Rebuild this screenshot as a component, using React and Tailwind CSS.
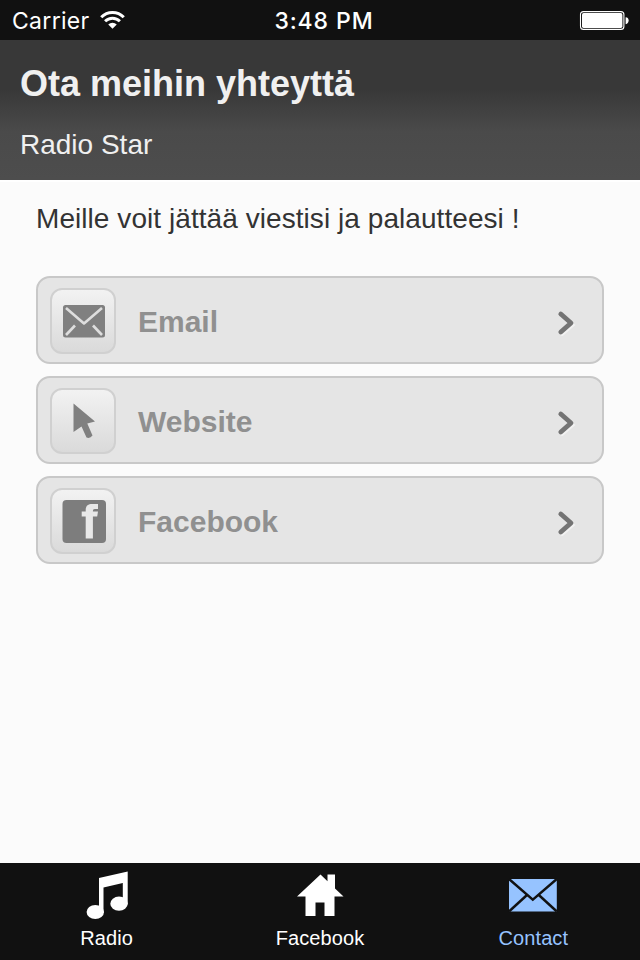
import React from "react";

function WifiIcon() {
  return (
    <svg width="25" height="20" viewBox="0 0 26 20" fill="none" stroke="#fff">
      <path d="M1.3 7.1A16.4 16.4 0 0 1 24.7 7.1" strokeWidth="3.2" />
      <path d="M5.3 11.4A10.7 10.7 0 0 1 20.7 11.4" strokeWidth="3" />
      <path d="M13 19L8.6 14.7A6 6 0 0 1 17.4 14.7Z" fill="#fff" stroke="none" />
    </svg>
  );
}

function BatteryIcon() {
  return (
    <svg width="50" height="20" viewBox="0 0 50 20">
      <rect x="1.5" y="1.6" width="43.4" height="17.8" rx="3" fill="none" stroke="#fff" strokeWidth="1.1" />
      <rect x="3" y="3.1" width="40.4" height="14.8" rx="1.6" fill="#fff" />
      <path d="M46.6 7.2C48.8 7.4 49.6 8.7 49.6 10.5S48.8 13.8 46.6 14.2Z" fill="#fff" />
    </svg>
  );
}

function MailGlyph() {
  return (
    <svg width="62" height="62" viewBox="0 0 62 62">
      <rect x="11" y="15" width="42" height="32.5" rx="2.5" fill="#808080" />
      <g fill="none" stroke="#dedede" strokeWidth="2.6" strokeLinejoin="round">
        <path d="M14 18L32 33.5L50 18" />
        <path d="M14 45L23 35.5" />
        <path d="M50 45L41 35.5" />
      </g>
    </svg>
  );
}

function CursorGlyph() {
  return (
    <svg width="62" height="62" viewBox="0 0 62 62">
      <path d="M21.5 13.5L43 31.5L35.3 33.5L40.5 45.5Q38 49 34.5 47.5L29.5 36.5L21.5 42Z" fill="#808080" />
    </svg>
  );
}

function FacebookGlyph() {
  return (
    <svg width="62" height="62" viewBox="0 0 62 62">
      <rect x="10.5" y="10" width="43.5" height="43" rx="4" fill="#7d7d7d" />
      <path d="M33.7 48.5V26.5H29.7V21.5H33.7V20C33.7 15.5 36.5 14 40 14H46V19H42.9C41.4 19 40.9 19.8 40.9 21.5H46L45.2 26.5H40.9V48.5Z" fill="#e8e8e8" />
    </svg>
  );
}

function Chevron() {
  return (
    <svg width="24" height="34" viewBox="0 0 24 34" fill="none" strokeLinecap="round">
      <path d="M6 10L16.4 19L6 28" stroke="#f2f2f2" strokeWidth="4" />
      <path d="M4.8 8L15 17L4.8 26" stroke="#747474" strokeWidth="4.8" strokeLinejoin="round" />
    </svg>
  );
}

function NotesIcon() {
  return (
    <svg width="48" height="50" viewBox="0 0 48 50" fill="#fff">
      <path d="M16 8L44.7 1.5V34.5H39.8V13L20.5 17.5V43H16Z" />
      <ellipse cx="12.3" cy="42" rx="8.7" ry="7.1" />
      <ellipse cx="36" cy="33.7" rx="8.7" ry="7.1" />
    </svg>
  );
}

function HomeIcon() {
  return (
    <svg width="48" height="50" viewBox="0 0 48 50" fill="#fff">
      <path d="M24.5 4.5L31.5 11.2V4.5H39V18.5L47.5 26.5H38.5V46H28.5V32.5H19.5V46H9.5V26.5H1Z" />
    </svg>
  );
}

function EnvelopeIcon() {
  return (
    <svg width="50" height="50" viewBox="0 0 50 50">
      <rect x="1" y="9" width="47.8" height="32.5" fill="#96c3ff" />
      <g fill="none" stroke="#111" strokeWidth="2.4">
        <path d="M1 9L24.8 29.7L48.8 9" />
        <path d="M1 41.5L19 25" />
        <path d="M48.8 41.5L30.8 25" />
      </g>
    </svg>
  );
}

function LinkCard({ label, glyph }) {
  return (
    <button className="flex h-[88px] w-full items-center rounded-[14px] border-2 border-[#c8c8c8] bg-[#e5e5e5] pr-[22px] pl-3 text-left">
      <span className="mt-[2px] flex h-[66px] w-[66px] shrink-0 rounded-xl border-2 border-[#d0d0d0] bg-linear-to-b from-[#f2f2f2] to-[#dadada]">
        {glyph}
      </span>
      <span className="mt-[3px] ml-[22px] flex-1 text-[30px] leading-9 font-bold text-[#909090]">{label}</span>
      <span className="mt-[5px]">
        <Chevron />
      </span>
    </button>
  );
}

function Tab({ label, icon, active }) {
  return (
    <a className={`flex flex-1 flex-col items-center pt-[7px] ${active ? "text-[#96c3ff]" : "text-white"}`}>
      {icon}
      <span className="mt-[6px] text-[20px] leading-6 tracking-[0.1px]">{label}</span>
    </a>
  );
}

export default function App() {
  return (
    <div className="flex h-[960px] w-[640px] flex-col overflow-hidden bg-[#fbfbfb] font-['Liberation_Sans',Arial,sans-serif]">
      <div className="grid h-10 grid-cols-3 items-center bg-[#111] pr-[11px] pl-3 font-['Inter',sans-serif] text-[23px] text-white">
        <div className="flex items-center gap-[10px]">
          <span className="pt-[2px] tracking-[0.3px]">Carrier</span>
          <WifiIcon />
        </div>
        <span className="pt-[2px] pl-[7px] text-center font-medium tracking-[0.9px] whitespace-nowrap">3:48 PM</span>
        <span className="flex justify-end">
          <BatteryIcon />
        </span>
      </div>
      <header className="h-[140px] bg-linear-to-b from-[#383838] from-35% via-[#4a4a4a] via-65% to-[#4d4d4d] px-5 pt-[22px] text-[#f0f0f0]">
        <h1 className="text-[36px] leading-[44px] font-bold whitespace-nowrap">Ota meihin yhteyttä</h1>
        <p className="mt-[23px] text-[28px] leading-8">Radio Star</p>
      </header>
      <main className="flex-1 border-t-2 border-white px-9 pt-[19px]">
        <p className="text-[28px] leading-9 tracking-[0.06px] whitespace-nowrap text-[#333]">Meille voit jättää viestisi ja palautteesi !</p>
        <div className="mt-[39px] flex flex-col gap-3">
          <LinkCard label="Email" glyph={<MailGlyph />} />
          <LinkCard label="Website" glyph={<CursorGlyph />} />
          <LinkCard label="Facebook" glyph={<FacebookGlyph />} />
        </div>
      </main>
      <nav className="flex h-[97px] bg-[#111]">
        <Tab label="Radio" icon={<NotesIcon />} />
        <Tab label="Facebook" icon={<HomeIcon />} />
        <Tab label="Contact" icon={<EnvelopeIcon />} active />
      </nav>
    </div>
  );
}
